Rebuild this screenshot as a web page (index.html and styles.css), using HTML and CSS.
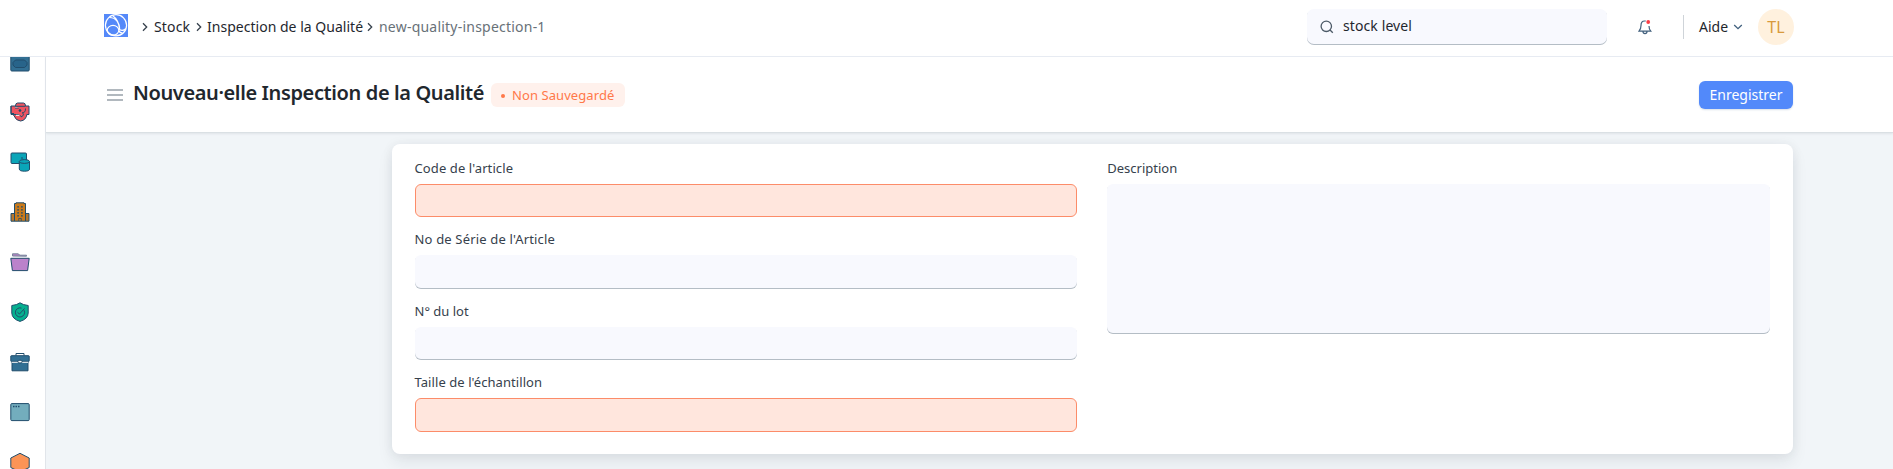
FILE: index.html
```html
<!DOCTYPE html>
<html lang="fr">
<head>
<meta charset="utf-8">
<title>Nouveau·elle Inspection de la Qualité</title>
<link rel="stylesheet" href="styles.css">
</head>
<body>
<header class="navbar">
  <svg class="logo" viewBox="0 0 24 23"><rect width="24" height="23" fill="#5589f9"/><g fill="none" stroke="#fff" stroke-width="1.2"><circle cx="12" cy="11.3" r="10.600"/><ellipse cx="9" cy="16.300" rx="5.800" ry="4.900"/><path d="M5.500 3.500C12 3.500 15.800 9 15.600 15.500M8.500 1.600C12 4 15 9 15.600 15.500C17.500 17 20 16.500 22 14.500M14.800 16.500C15.500 18.500 17 19 18.500 19"/></g></svg>
  <nav class="crumbs">
    <svg class="chev" viewBox="0 0 6 10"><path d="M1 1.300L4.700 5L1 8.700"/></svg>
    <a class="crumb c1">Stock</a>
    <svg class="chev" viewBox="0 0 6 10"><path d="M1 1.300L4.700 5L1 8.700"/></svg>
    <a class="crumb c2">Inspection de la Qualité</a>
    <svg class="chev" viewBox="0 0 6 10"><path d="M1 1.300L4.700 5L1 8.700"/></svg>
    <a class="crumb c3">new-quality-inspection-1</a>
  </nav>
  <div class="search">
    <svg viewBox="0 0 14 14"><circle cx="6.300" cy="6.300" r="5.200"/><path d="M10 10L12.800 12.800"/></svg>
    <span>stock level</span>
  </div>
  <svg class="bell" viewBox="0 0 14 16"><path d="M7.800 2H6.500C4 2 3 4 3 6.500C3 9.500 2.600 10.500 1 12.200H12.800C11.300 10.500 11 9.500 11 7M5 12.500C5 15.200 9 15.200 9 12.500"/><circle cx="10.200" cy="3" r="1.900"/></svg>
  <div class="rule"></div>
  <div class="help"><span>Aide</span><svg viewBox="0 0 10 6"><path d="M1.200 1L5 4.600L8.800 1"/></svg></div>
  <div class="avatar">TL</div>
</header>
<div class="shell">
  <aside class="sidebar">
    <div class="modules">
      <svg viewBox="0 0 20 20"><rect x=".8" y="2" width="18.400" height="17" rx="1" fill="#326f93"/><path d="M5.500 8H14.500L17 10.500V13.200L14.500 15.500H5.500L3 13.200V10.500Z" fill="#28648a"/></svg>
      <svg viewBox="0 0 20 20"><path d="M3.500 9V13Q6 19 10.500 19Q16 18.500 17 12V6H4Z" fill="#ef5360"/><path d="M5.500 4Q5.500 1 7.500 1H13.500Q15.500 1 15.500 4H19V12.500H17M5.500 4H1V11.500H4" fill="#ef5360"/><path d="M5 4.300H15.500M1 4V12.500H8.500L12 15M11.500 15Q15 13 12.500 10.500Q15.500 11 15.500 6.500"/><circle cx="10" cy="8.500" r=".9" fill="#173c59"/><path d="M6 13.300H9.500" stroke="#fff"/></svg>
      <svg viewBox="0 0 20 20"><rect x="1" y="1" width="15.500" height="10.500" rx="1" fill="#0aa5b8"/><path d="M11 6H13"/><path d="M9.300 9.500V17Q9.300 19.200 14.500 19.200T19.500 17V9.500" fill="#0aa5b8"/><ellipse cx="14.400" cy="9.500" rx="5.100" ry="1.900" fill="#0aa5b8"/></svg>
      <svg viewBox="0 0 20 20"><path d="M1 11.500H4.500V19.200H1ZM15.500 11.500H19V19.200H15.500Z" fill="#b8772c"/><path d="M4.500 19.200V1.500H6V.8H14V1.500H15.500V19.200Z" fill="#c97a1c"/><path d="M8.700 19V16.500H11.300V19" stroke-width=".8"/><path d="M7.200 4.800H9M11 4.800H12.800M7.200 7.800H9M11 7.800H12.800M7.200 10.800H9M11 10.800H12.800M7.200 13.800H9M11 13.800H12.800" stroke-width="1.200"/></svg>
      <svg viewBox="0 0 20 20"><path d="M2.500 4V1.800H8L10 3.200H16.500V4.200Z" fill="#b681c5" stroke="#77869b"/><path d="M.8 6.300H19.200L17.600 18.600H2.400Z" fill="#bb82cb"/></svg>
      <svg viewBox="0 0 20 20"><path d="M10 .8Q13 3 18.200 3.500V11Q18 17 10 19.400Q2 17 1.800 11V3.500Q7 3 10 .8Z" fill="#05b08f"/><path d="M14 8.200A4.600 4.600 0 1 1 11.500 6.100M7.500 10.300L9.500 12L14.500 6.500"/></svg>
      <svg viewBox="0 0 20 20"><path d="M6 3.500V1.500H14V3.500"/><path d="M2 10V18.800H18V10Z" fill="#326f93"/><rect x=".8" y="3.700" width="18.400" height="5.700" rx=".6" fill="#326f93"/><path d="M2 10.300H18" stroke="#fff"/><rect x="8" y="8.300" width="4" height="2.600" rx="1" fill="#fff"/></svg>
      <svg viewBox="0 0 20 20"><rect x=".8" y="1.600" width="18.400" height="17" rx="1" fill="#73adbd"/><path d="M3 4.500H4.500M5.500 4.500H7M8 4.500H9.500" stroke-width="1.400"/></svg>
      <svg viewBox="0 0 20 20"><path d="M10 1.300L19.200 6V15.500L10 20L.8 15.500V6Z" fill="#fc9456"/></svg>
    </div>
  </aside>
  <main class="page">
    <div class="page-head">
      <svg class="menu" viewBox="0 0 16 12"><path d="M0 1H16M0 6H16M0 11H16"/></svg>
      <h1>Nouveau·elle Inspection de la Qualité</h1>
      <span class="status"><i></i><span>Non Sauvegardé</span></span>
      <button class="save">Enregistrer</button>
    </div>
    <div class="content">
      <section class="card">
        <div class="col">
          <div class="field"><label class="l1">Code de l'article</label><div class="input required"></div></div>
          <div class="field"><label class="l2">No de Série de l'Article</label><div class="input"></div></div>
          <div class="field"><label class="l3">N° du lot</label><div class="input"></div></div>
          <div class="field"><label class="l4">Taille de l'échantillon</label><div class="input required"></div></div>
        </div>
        <div class="col">
          <div class="field"><label class="l5">Description</label><div class="input tall"></div></div>
        </div>
      </section>
    </div>
  </main>
</div>
</body>
</html>
```
FILE: styles.css
```css
* { box-sizing: border-box; }
body { margin: 0; height: 469px; overflow: hidden; display: flex; flex-direction: column; background: #f1f5f8; color: #1f272e; font-family: "Noto Sans", sans-serif; font-size: 14px; }
svg { display: block; flex: none; }
.navbar { height: 57px; flex: none; display: flex; align-items: center; background: #fff; border-bottom: 1px solid #e8ecf3; padding: 0 99px 3px 104px; }
.logo { width: 24px; height: 23px; margin-top: -3px; }
.crumbs { display: flex; align-items: center; margin: -1px 0 0 14px; }
.crumb { white-space: nowrap; }
.chev { width: 6px; height: 10px; margin-top: 1px; fill: none; stroke: #36414c; stroke-width: 1.3; }
.c1 { width: 38px; margin: 0 4px 0 6px; letter-spacing: .15px; }
.c2 { width: 156px; margin: 0 4px 0 5px; letter-spacing: .02px; }
.c3 { margin-left: 6px; color: #687178; letter-spacing: .22px; }
.search { width: 300px; height: 36px; margin-left: auto; padding-left: 13px; display: flex; align-items: center; gap: 9px; background: #f8f9fe; border-radius: 7px; box-shadow: inset 0 -1px 0 #b4bdc5; letter-spacing: .1px; }
.search span { margin-top: -2px; }
.search svg { width: 14px; height: 14px; fill: none; stroke: #4c5a67; stroke-width: 1.3; }
.bell { width: 14px; height: 16px; margin-left: 31px; fill: none; stroke: #42607d; stroke-width: 1.2; }
.bell circle { fill: #fb3c45; stroke: none; }
.rule { width: 1px; height: 24px; margin-left: 31px; background: #cfd4d9; }
.help { display: flex; align-items: center; gap: 6px; margin-left: 15px; }
.help span { width: 28px; margin-top: -1px; }
.help svg { width: 10px; height: 6px; fill: none; stroke: #3f5f7d; stroke-width: 1.3; }
.avatar { width: 36px; height: 36px; margin-left: 15px; border-radius: 50%; background: #fff1de; color: #d89a3d; font-size: 16px; line-height: 36px; text-align: center; }
.shell { flex: 1; min-height: 0; display: flex; }
.sidebar { width: 46px; background: #fff; border-right: 1px solid #e1e5ea; overflow: hidden; }
.modules { display: flex; flex-direction: column; align-items: center; gap: 30px; margin: -5px 5px 0 0; }
.modules svg { width: 20px; height: 20px; fill: none; stroke: #214d6c; stroke-width: 1; stroke-linejoin: round; }
.page { flex: 1; min-width: 0; display: flex; flex-direction: column; }
.page-head { height: 76px; flex: none; display: flex; align-items: center; padding: 0 100px 0 61px; background: #fff; border-bottom: 1px solid #dae0e4; box-shadow: 0 1px 2px #dfe4e8; position: relative; z-index: 1; }
.menu { width: 16px; height: 12px; stroke: #98a1a9; stroke-width: 1.700; }
h1 { width: 351px; margin: -4px 0 0 10px; font-size: 20px; line-height: 28px; font-weight: 600; letter-spacing: -.38px; white-space: nowrap; }
.status { display: flex; align-items: center; width: 134px; height: 24px; margin: 1px 0 0 7px; padding: 0 0 1px 10px; gap: 7px; border-radius: 6px; background: #fff1ec; color: #ff7849; font-size: 13px; letter-spacing: .08px; white-space: nowrap; }
.status i { width: 4px; height: 4px; margin-top: 2px; border-radius: 50%; background: #ff7849; }
.save { width: 94px; height: 28px; margin-left: auto; padding: 0; border: 0; border-radius: 6px; background: #5289fa; color: #fff; font: 14px "Noto Sans", sans-serif; box-shadow: 0 1px 2px #d8dfe8; }
.content { padding: 11px 100px 15px 346px; }
.card { height: 310px; display: flex; gap: 30px; padding: 15px 23px 15px 22.500px; background: #fff; border-radius: 8px; box-shadow: 0 8px 16px rgba(25, 39, 52, .08), 0 0 12px rgba(25, 39, 52, .06); }
.col { flex: 1; display: flex; flex-direction: column; gap: 13px; }
.field { display: flex; flex-direction: column; gap: 6px; }
label { height: 19px; line-height: 19px; font-size: 13px; color: #36414c; white-space: nowrap; }
.l1 { letter-spacing: .1px; }
.l2 { letter-spacing: .17px; }
.l4 { letter-spacing: .07px; }
.input { height: 33.400px; border-radius: 6px; background: #f8f9fe; box-shadow: inset 0 -1px 0 #b4bdc5; }
.required { background: #ffe6dd; border: 1px solid #fc8c69; box-shadow: none; }
.tall { height: 150px; }
```
